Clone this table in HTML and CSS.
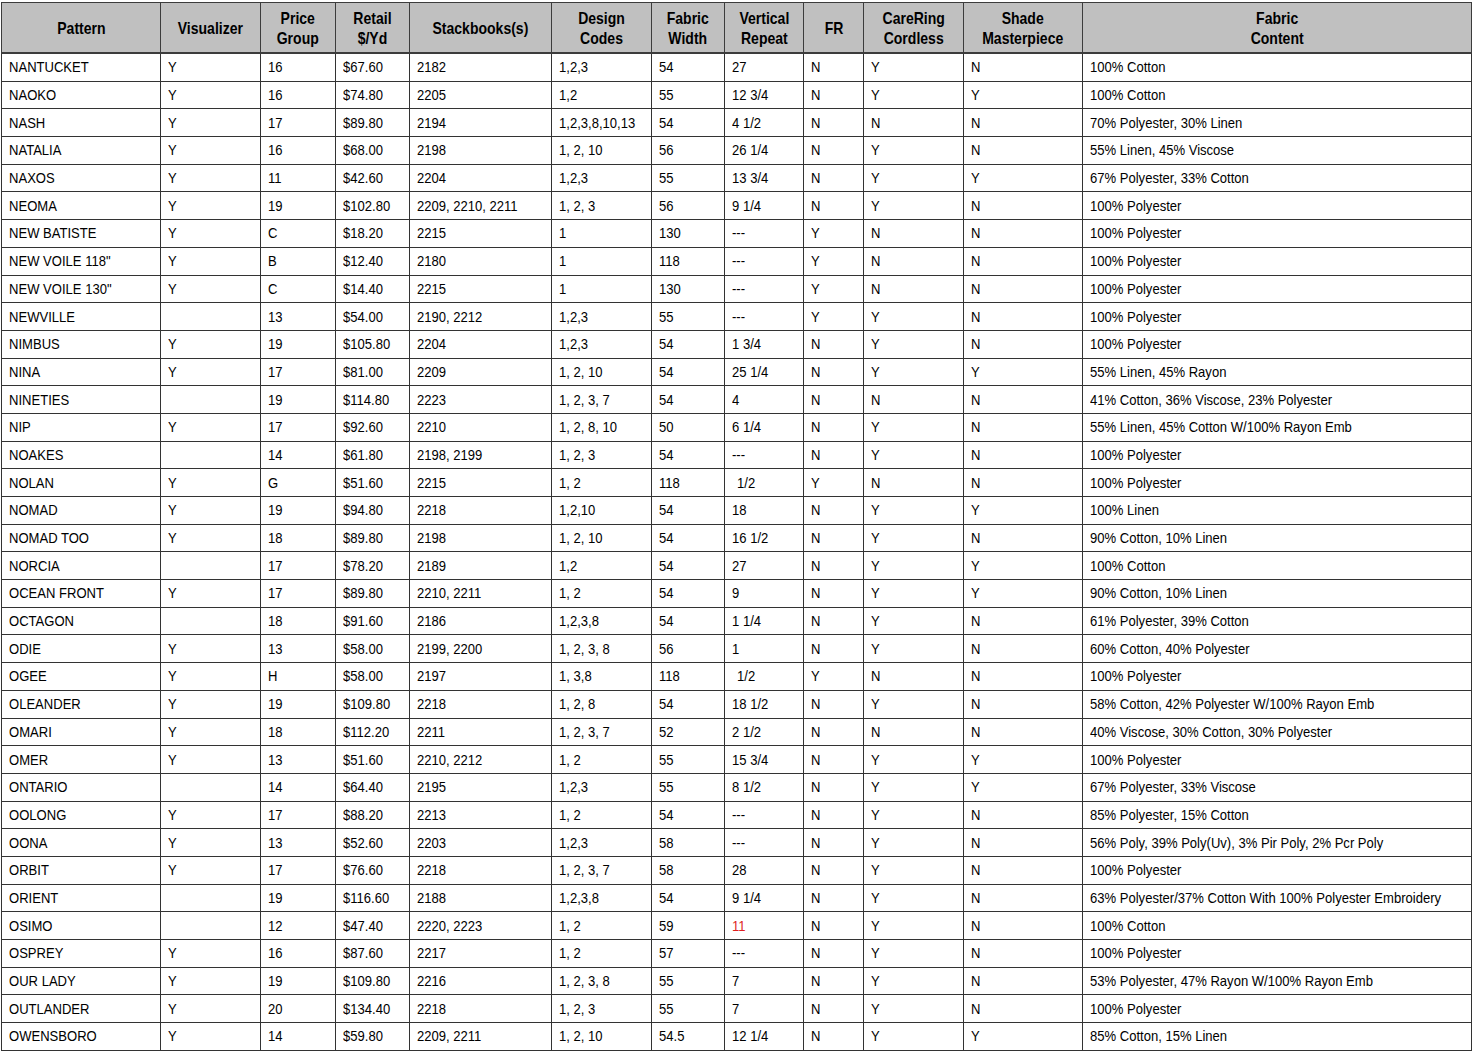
FILE: index.html
```html
<!DOCTYPE html>
<html>
<head>
<meta charset="utf-8">
<link rel="stylesheet" href="styles.css">
</head>
<body>
<table class="grid">
<colgroup>
<col class="c1"><col class="c2"><col class="c3"><col class="c4"><col class="c5"><col class="c6"><col class="c7"><col class="c8"><col class="c9"><col class="c10"><col class="c11"><col class="c12">
</colgroup>
<thead>
<tr><th><span>Pattern</span></th><th><span>Visualizer</span></th><th><span>Price<br>Group</span></th><th><span>Retail<br>$/Yd</span></th><th><span>Stackbooks(s)</span></th><th><span>Design<br>Codes</span></th><th><span>Fabric<br>Width</span></th><th><span>Vertical<br>Repeat</span></th><th><span>FR</span></th><th><span>CareRing<br>Cordless</span></th><th><span>Shade<br>Masterpiece</span></th><th><span>Fabric<br>Content</span></th></tr>
</thead>
<tbody>
<tr><td><span>NANTUCKET</span></td><td><span>Y</span></td><td><span>16</span></td><td><span>$67.60</span></td><td><span>2182</span></td><td><span>1,2,3</span></td><td><span>54</span></td><td><span>27</span></td><td><span>N</span></td><td><span>Y</span></td><td><span>N</span></td><td><span>100% Cotton</span></td></tr>
<tr><td><span>NAOKO</span></td><td><span>Y</span></td><td><span>16</span></td><td><span>$74.80</span></td><td><span>2205</span></td><td><span>1,2</span></td><td><span>55</span></td><td><span>12 3/4</span></td><td><span>N</span></td><td><span>Y</span></td><td><span>Y</span></td><td><span>100% Cotton</span></td></tr>
<tr><td><span>NASH</span></td><td><span>Y</span></td><td><span>17</span></td><td><span>$89.80</span></td><td><span>2194</span></td><td><span>1,2,3,8,10,13</span></td><td><span>54</span></td><td><span>4 1/2</span></td><td><span>N</span></td><td><span>N</span></td><td><span>N</span></td><td><span>70% Polyester, 30% Linen</span></td></tr>
<tr><td><span>NATALIA</span></td><td><span>Y</span></td><td><span>16</span></td><td><span>$68.00</span></td><td><span>2198</span></td><td><span>1, 2, 10</span></td><td><span>56</span></td><td><span>26 1/4</span></td><td><span>N</span></td><td><span>Y</span></td><td><span>N</span></td><td><span>55% Linen, 45% Viscose</span></td></tr>
<tr><td><span>NAXOS</span></td><td><span>Y</span></td><td><span>11</span></td><td><span>$42.60</span></td><td><span>2204</span></td><td><span>1,2,3</span></td><td><span>55</span></td><td><span>13 3/4</span></td><td><span>N</span></td><td><span>Y</span></td><td><span>Y</span></td><td><span>67% Polyester, 33% Cotton</span></td></tr>
<tr><td><span>NEOMA</span></td><td><span>Y</span></td><td><span>19</span></td><td><span>$102.80</span></td><td><span>2209, 2210, 2211</span></td><td><span>1, 2, 3</span></td><td><span>56</span></td><td><span>9 1/4</span></td><td><span>N</span></td><td><span>Y</span></td><td><span>N</span></td><td><span>100% Polyester</span></td></tr>
<tr><td><span>NEW BATISTE</span></td><td><span>Y</span></td><td><span>C</span></td><td><span>$18.20</span></td><td><span>2215</span></td><td><span>1</span></td><td><span>130</span></td><td><span>---</span></td><td><span>Y</span></td><td><span>N</span></td><td><span>N</span></td><td><span>100% Polyester</span></td></tr>
<tr><td><span>NEW VOILE 118"</span></td><td><span>Y</span></td><td><span>B</span></td><td><span>$12.40</span></td><td><span>2180</span></td><td><span>1</span></td><td><span>118</span></td><td><span>---</span></td><td><span>Y</span></td><td><span>N</span></td><td><span>N</span></td><td><span>100% Polyester</span></td></tr>
<tr><td><span>NEW VOILE 130"</span></td><td><span>Y</span></td><td><span>C</span></td><td><span>$14.40</span></td><td><span>2215</span></td><td><span>1</span></td><td><span>130</span></td><td><span>---</span></td><td><span>Y</span></td><td><span>N</span></td><td><span>N</span></td><td><span>100% Polyester</span></td></tr>
<tr><td><span>NEWVILLE</span></td><td></td><td><span>13</span></td><td><span>$54.00</span></td><td><span>2190, 2212</span></td><td><span>1,2,3</span></td><td><span>55</span></td><td><span>---</span></td><td><span>Y</span></td><td><span>Y</span></td><td><span>N</span></td><td><span>100% Polyester</span></td></tr>
<tr><td><span>NIMBUS</span></td><td><span>Y</span></td><td><span>19</span></td><td><span>$105.80</span></td><td><span>2204</span></td><td><span>1,2,3</span></td><td><span>54</span></td><td><span>1 3/4</span></td><td><span>N</span></td><td><span>Y</span></td><td><span>N</span></td><td><span>100% Polyester</span></td></tr>
<tr><td><span>NINA</span></td><td><span>Y</span></td><td><span>17</span></td><td><span>$81.00</span></td><td><span>2209</span></td><td><span>1, 2, 10</span></td><td><span>54</span></td><td><span>25 1/4</span></td><td><span>N</span></td><td><span>Y</span></td><td><span>Y</span></td><td><span>55% Linen, 45% Rayon</span></td></tr>
<tr><td><span>NINETIES</span></td><td></td><td><span>19</span></td><td><span>$114.80</span></td><td><span>2223</span></td><td><span>1, 2, 3, 7</span></td><td><span>54</span></td><td><span>4</span></td><td><span>N</span></td><td><span>N</span></td><td><span>N</span></td><td><span>41% Cotton, 36% Viscose, 23% Polyester</span></td></tr>
<tr><td><span>NIP</span></td><td><span>Y</span></td><td><span>17</span></td><td><span>$92.60</span></td><td><span>2210</span></td><td><span>1, 2, 8, 10</span></td><td><span>50</span></td><td><span>6 1/4</span></td><td><span>N</span></td><td><span>Y</span></td><td><span>N</span></td><td><span>55% Linen, 45% Cotton W/100% Rayon Emb</span></td></tr>
<tr><td><span>NOAKES</span></td><td></td><td><span>14</span></td><td><span>$61.80</span></td><td><span>2198, 2199</span></td><td><span>1, 2, 3</span></td><td><span>54</span></td><td><span>---</span></td><td><span>N</span></td><td><span>Y</span></td><td><span>N</span></td><td><span>100% Polyester</span></td></tr>
<tr><td><span>NOLAN</span></td><td><span>Y</span></td><td><span>G</span></td><td><span>$51.60</span></td><td><span>2215</span></td><td><span>1, 2</span></td><td><span>118</span></td><td class="ind"><span>1/2</span></td><td><span>Y</span></td><td><span>N</span></td><td><span>N</span></td><td><span>100% Polyester</span></td></tr>
<tr><td><span>NOMAD</span></td><td><span>Y</span></td><td><span>19</span></td><td><span>$94.80</span></td><td><span>2218</span></td><td><span>1,2,10</span></td><td><span>54</span></td><td><span>18</span></td><td><span>N</span></td><td><span>Y</span></td><td><span>Y</span></td><td><span>100% Linen</span></td></tr>
<tr><td><span>NOMAD TOO</span></td><td><span>Y</span></td><td><span>18</span></td><td><span>$89.80</span></td><td><span>2198</span></td><td><span>1, 2, 10</span></td><td><span>54</span></td><td><span>16 1/2</span></td><td><span>N</span></td><td><span>Y</span></td><td><span>N</span></td><td><span>90% Cotton, 10% Linen</span></td></tr>
<tr><td><span>NORCIA</span></td><td></td><td><span>17</span></td><td><span>$78.20</span></td><td><span>2189</span></td><td><span>1,2</span></td><td><span>54</span></td><td><span>27</span></td><td><span>N</span></td><td><span>Y</span></td><td><span>Y</span></td><td><span>100% Cotton</span></td></tr>
<tr><td><span>OCEAN FRONT</span></td><td><span>Y</span></td><td><span>17</span></td><td><span>$89.80</span></td><td><span>2210, 2211</span></td><td><span>1, 2</span></td><td><span>54</span></td><td><span>9</span></td><td><span>N</span></td><td><span>Y</span></td><td><span>Y</span></td><td><span>90% Cotton, 10% Linen</span></td></tr>
<tr><td><span>OCTAGON</span></td><td></td><td><span>18</span></td><td><span>$91.60</span></td><td><span>2186</span></td><td><span>1,2,3,8</span></td><td><span>54</span></td><td><span>1 1/4</span></td><td><span>N</span></td><td><span>Y</span></td><td><span>N</span></td><td><span>61% Polyester, 39% Cotton</span></td></tr>
<tr><td><span>ODIE</span></td><td><span>Y</span></td><td><span>13</span></td><td><span>$58.00</span></td><td><span>2199, 2200</span></td><td><span>1, 2, 3, 8</span></td><td><span>56</span></td><td><span>1</span></td><td><span>N</span></td><td><span>Y</span></td><td><span>N</span></td><td><span>60% Cotton, 40% Polyester</span></td></tr>
<tr><td><span>OGEE</span></td><td><span>Y</span></td><td><span>H</span></td><td><span>$58.00</span></td><td><span>2197</span></td><td><span>1, 3,8</span></td><td><span>118</span></td><td class="ind"><span>1/2</span></td><td><span>Y</span></td><td><span>N</span></td><td><span>N</span></td><td><span>100% Polyester</span></td></tr>
<tr><td><span>OLEANDER</span></td><td><span>Y</span></td><td><span>19</span></td><td><span>$109.80</span></td><td><span>2218</span></td><td><span>1, 2, 8</span></td><td><span>54</span></td><td><span>18 1/2</span></td><td><span>N</span></td><td><span>Y</span></td><td><span>N</span></td><td><span>58% Cotton, 42% Polyester W/100% Rayon Emb</span></td></tr>
<tr><td><span>OMARI</span></td><td><span>Y</span></td><td><span>18</span></td><td><span>$112.20</span></td><td><span>2211</span></td><td><span>1, 2, 3, 7</span></td><td><span>52</span></td><td><span>2 1/2</span></td><td><span>N</span></td><td><span>N</span></td><td><span>N</span></td><td><span>40% Viscose, 30% Cotton, 30% Polyester</span></td></tr>
<tr><td><span>OMER</span></td><td><span>Y</span></td><td><span>13</span></td><td><span>$51.60</span></td><td><span>2210, 2212</span></td><td><span>1, 2</span></td><td><span>55</span></td><td><span>15 3/4</span></td><td><span>N</span></td><td><span>Y</span></td><td><span>Y</span></td><td><span>100% Polyester</span></td></tr>
<tr><td><span>ONTARIO</span></td><td></td><td><span>14</span></td><td><span>$64.40</span></td><td><span>2195</span></td><td><span>1,2,3</span></td><td><span>55</span></td><td><span>8 1/2</span></td><td><span>N</span></td><td><span>Y</span></td><td><span>Y</span></td><td><span>67% Polyester, 33% Viscose</span></td></tr>
<tr><td><span>OOLONG</span></td><td><span>Y</span></td><td><span>17</span></td><td><span>$88.20</span></td><td><span>2213</span></td><td><span>1, 2</span></td><td><span>54</span></td><td><span>---</span></td><td><span>N</span></td><td><span>Y</span></td><td><span>N</span></td><td><span>85% Polyester, 15% Cotton</span></td></tr>
<tr><td><span>OONA</span></td><td><span>Y</span></td><td><span>13</span></td><td><span>$52.60</span></td><td><span>2203</span></td><td><span>1,2,3</span></td><td><span>58</span></td><td><span>---</span></td><td><span>N</span></td><td><span>Y</span></td><td><span>N</span></td><td><span>56% Poly, 39% Poly(Uv), 3% Pir Poly, 2% Pcr Poly</span></td></tr>
<tr><td><span>ORBIT</span></td><td><span>Y</span></td><td><span>17</span></td><td><span>$76.60</span></td><td><span>2218</span></td><td><span>1, 2, 3, 7</span></td><td><span>58</span></td><td><span>28</span></td><td><span>N</span></td><td><span>Y</span></td><td><span>N</span></td><td><span>100% Polyester</span></td></tr>
<tr><td><span>ORIENT</span></td><td></td><td><span>19</span></td><td><span>$116.60</span></td><td><span>2188</span></td><td><span>1,2,3,8</span></td><td><span>54</span></td><td><span>9 1/4</span></td><td><span>N</span></td><td><span>Y</span></td><td><span>N</span></td><td><span>63% Polyester/37% Cotton With 100% Polyester Embroidery</span></td></tr>
<tr><td><span>OSIMO</span></td><td></td><td><span>12</span></td><td><span>$47.40</span></td><td><span>2220, 2223</span></td><td><span>1, 2</span></td><td><span>59</span></td><td class="red"><span>11</span></td><td><span>N</span></td><td><span>Y</span></td><td><span>N</span></td><td><span>100% Cotton</span></td></tr>
<tr><td><span>OSPREY</span></td><td><span>Y</span></td><td><span>16</span></td><td><span>$87.60</span></td><td><span>2217</span></td><td><span>1, 2</span></td><td><span>57</span></td><td><span>---</span></td><td><span>N</span></td><td><span>Y</span></td><td><span>N</span></td><td><span>100% Polyester</span></td></tr>
<tr><td><span>OUR LADY</span></td><td><span>Y</span></td><td><span>19</span></td><td><span>$109.80</span></td><td><span>2216</span></td><td><span>1, 2, 3, 8</span></td><td><span>55</span></td><td><span>7</span></td><td><span>N</span></td><td><span>Y</span></td><td><span>N</span></td><td><span>53% Polyester, 47% Rayon W/100% Rayon Emb</span></td></tr>
<tr><td><span>OUTLANDER</span></td><td><span>Y</span></td><td><span>20</span></td><td><span>$134.40</span></td><td><span>2218</span></td><td><span>1, 2, 3</span></td><td><span>55</span></td><td><span>7</span></td><td><span>N</span></td><td><span>Y</span></td><td><span>N</span></td><td><span>100% Polyester</span></td></tr>
<tr><td><span>OWENSBORO</span></td><td><span>Y</span></td><td><span>14</span></td><td><span>$59.80</span></td><td><span>2209, 2211</span></td><td><span>1, 2, 10</span></td><td><span>54.5</span></td><td><span>12 1/4</span></td><td><span>N</span></td><td><span>Y</span></td><td><span>Y</span></td><td><span>85% Cotton, 15% Linen</span></td></tr>
</tbody>
</table>
</body>
</html>
```
FILE: styles.css
```css
html, body {
  margin: 0;
  padding: 0;
  background: #ffffff;
}
body {
  padding: 2px 0 0 1px;
  font-family: "Liberation Sans", Arial, sans-serif;
  color: #000;
}
.grid {
  border-collapse: collapse;
  table-layout: fixed;
  width: 1471px;
}
.c1 { width: 159px; }
.c2 { width: 100px; }
.c3 { width: 75px; }
.c4 { width: 74px; }
.c5 { width: 142px; }
.c6 { width: 100px; }
.c7 { width: 73px; }
.c8 { width: 79px; }
.c9 { width: 60px; }
.c10 { width: 100px; }
.c11 { width: 119px; }
.c12 { width: 389px; }
.grid th {
  background: #c0c0c0;
  border: 1px solid #3c3c3c;
  border-bottom: 2px solid #3c3c3c;
  font-weight: bold;
  font-size: 16.5px;
  line-height: 20px;
  height: 49px;
  padding: 0;
  text-align: center;
  vertical-align: middle;
  white-space: nowrap;
}
.grid th span {
  display: inline-block;
  transform: scaleX(0.85);
  transform-origin: 50% 50%;
}
.grid td {
  border: 1px solid #333;
  font-size: 15px;
  height: 26.7px;
  padding: 0 0 0 7px;
  white-space: nowrap;
  overflow: hidden;
  vertical-align: middle;
  line-height: 16px;
}
.grid td span {
  display: inline-block;
  transform: scaleX(0.87);
  transform-origin: 0 50%;
}
.grid td.ind { padding-left: 12px; }
.grid td.red { color: #e01f1f; }
```
